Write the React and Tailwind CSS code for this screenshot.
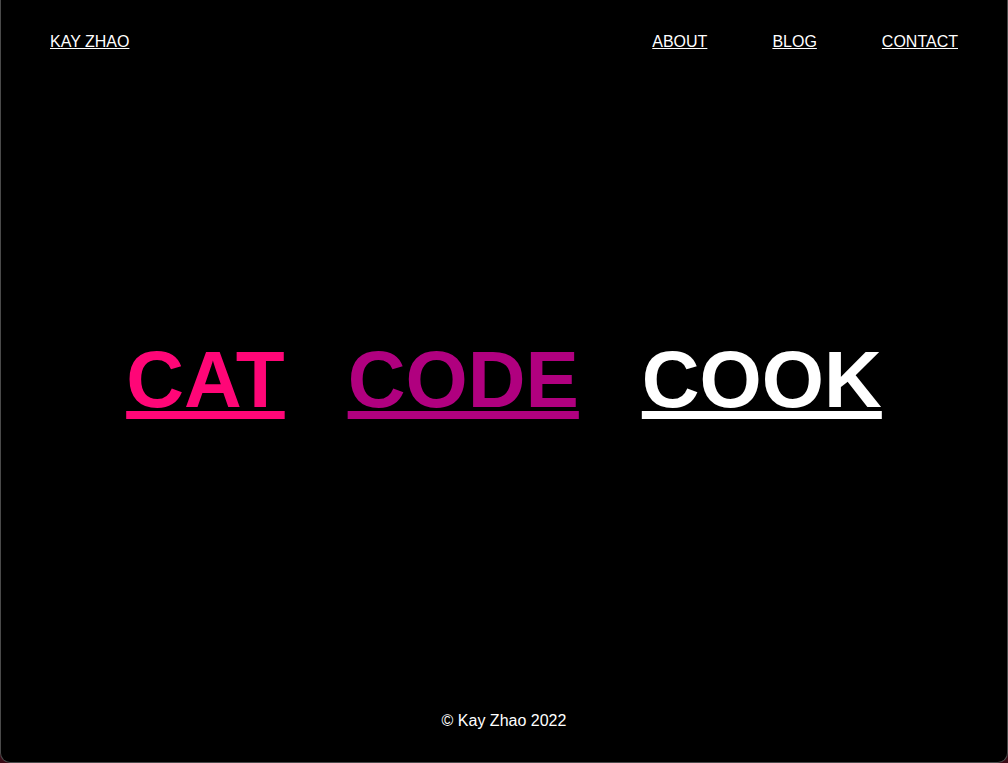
export default function App() {
  const nav = ["ABOUT", "BLOG", "CONTACT"];

  return (
    <div className="h-[763px] w-[1008px] bg-[#3a0b16] font-['Liberation_Sans',Arial,sans-serif]">
      {/* window frame */}
      <div className="flex h-full flex-col bg-black border-x border-b border-[#4a4a4a] rounded-b-[10px] text-white">
        {/* Header */}
        <header className="flex h-[82px] items-center justify-between px-[49px] pt-[2px]">
          <a href="#" className="text-base underline">
            KAY ZHAO
          </a>
          <nav className="flex gap-[65px]">
            {nav.map((item) => (
              <a key={item} href="#" className="text-base underline">
                {item}
              </a>
            ))}
          </nav>
        </header>

        {/* Main words */}
        <main className="flex flex-1 items-center justify-center gap-[63px] pb-[21px]">
          <a href="#" className="text-[80px] font-bold leading-normal text-[#ff0677] underline">
            CAT
          </a>
          <a href="#" className="text-[80px] font-bold leading-normal text-[#b0007f] underline">
            CODE
          </a>
          <a href="#" className="text-[80px] font-bold leading-normal text-white underline">
            COOK
          </a>
        </main>

        {/* Footer */}
        <footer className="mb-[18px] flex h-[46px] items-center justify-center text-base">
          © Kay Zhao 2022
        </footer>
      </div>
    </div>
  );
}
